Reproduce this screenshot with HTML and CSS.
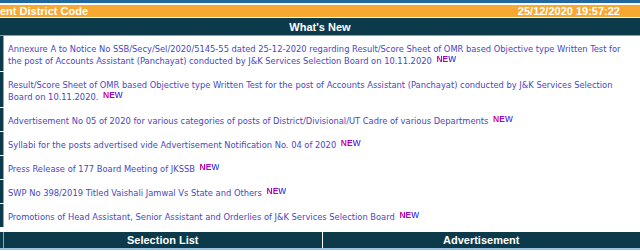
FILE: index.html
```html
<!DOCTYPE html>
<html>
<head>
<meta charset="utf-8">
<link rel="stylesheet" href="styles.css">
</head>
<body>
<div class="topline"></div>
<div class="datebar">
  <span class="dtitle">ent District Code</span>
  <span class="dtime">25/12/2020 19:57:22</span>
</div>
<div class="header">What's New</div>
<div class="list">
  <div class="row"><div class="side"></div><div class="cell"><a>Annexure A to Notice No SSB/Secy/Sel/2020/5145-55 dated 25-12-2020 regarding Result/Score Sheet of OMR based Objective type Written Test for the post of Accounts Assistant (Panchayat) conducted by J&amp;K Services Selection Board on 10.11.2020</a> <span class="new">NEW</span></div></div>
  <div class="row"><div class="side"></div><div class="cell"><a>Result/Score Sheet of OMR based Objective type Written Test for the post of Accounts Assistant (Panchayat) conducted by J&amp;K Services Selection Board on 10.11.2020.</a> <span class="new">NEW</span></div></div>
  <div class="row"><div class="side"></div><div class="cell"><a>Advertisement No 05 of 2020 for various categories of posts of District/Divisional/UT Cadre of various Departments</a> <span class="new">NEW</span></div></div>
  <div class="row"><div class="side"></div><div class="cell"><a>Syllabi for the posts advertised vide Advertisement Notification No. 04 of 2020</a> <span class="new">NEW</span></div></div>
  <div class="row"><div class="side"></div><div class="cell"><a>Press Release of 177 Board Meeting of JKSSB</a> <span class="new">NEW</span></div></div>
  <div class="row"><div class="side"></div><div class="cell"><a>SWP No 398/2019 Titled Vaishali Jamwal Vs State and Others</a> <span class="new">NEW</span></div></div>
  <div class="row"><div class="side"></div><div class="cell"><a>Promotions of Head Assistant, Senior Assistant and Orderlies of J&amp;K Services Selection Board</a> <span class="new">NEW</span></div></div>
</div>
<div class="bottom">
  <div class="side"></div>
  <div class="bhead">Selection List</div>
  <div class="bhead">Advertisement</div>
</div>
<div class="bline"></div>
</body>
</html>
```
FILE: styles.css
```css
html, body { margin: 0; padding: 0; background: #fff; }
body { width: 640px; height: 251px; overflow: hidden; font-family: "DejaVu Sans Condensed", "DejaVu Sans", sans-serif; }
.topline { height: 3px; background: #21679b; margin-bottom: 2px; }
.datebar { height: 12px; background: #f8a832; display: flex; justify-content: space-between; align-items: center; padding: 0 20px 0 0; font-family: "Liberation Sans", Arial, sans-serif; font-weight: bold; font-size: 11px; color: #fff; margin-bottom: 1px; }
.header { height: 17px; background: #0c3a4b; color: #fff; font-family: "Liberation Sans", Arial, sans-serif; font-weight: bold; font-size: 11px; display: flex; align-items: center; justify-content: center; border-bottom: 1px solid #7fa6b6; }
.list { display: flex; flex-direction: column; }
.row { display: flex; }
.side { width: 3px; background: #0c3a4b; border-right: 1px solid #8aa; flex: none; margin-bottom: 1px; }
.cell { flex: 1; padding: 7px 4px 5px 4px; font-size: 9.25px; line-height: 12px; color: #4848c2; }
.cell a { color: #4848c2; }
.new { font-family: "Liberation Sans", Arial, sans-serif; font-weight: 900; font-size: 8.5px; line-height: 0; vertical-align: 2px; background: linear-gradient(90deg, #e0008a 0%, #a000d0 45%, #1e7bff 100%); -webkit-background-clip: text; background-clip: text; color: transparent; margin-left: 2px; }
.bottom { display: flex; height: 16px; margin-top: 4px; }
.bottom .side { margin: 0; }
.bhead { flex: 1; background: #0c3a4b; color: #fff; font-family: "Liberation Sans", Arial, sans-serif; font-weight: bold; font-size: 11px; display: flex; align-items: center; justify-content: center; }
.bhead + .bhead { margin-left: 1px; }
.bline { height: 2px; background: #9cc3dc; }
```
